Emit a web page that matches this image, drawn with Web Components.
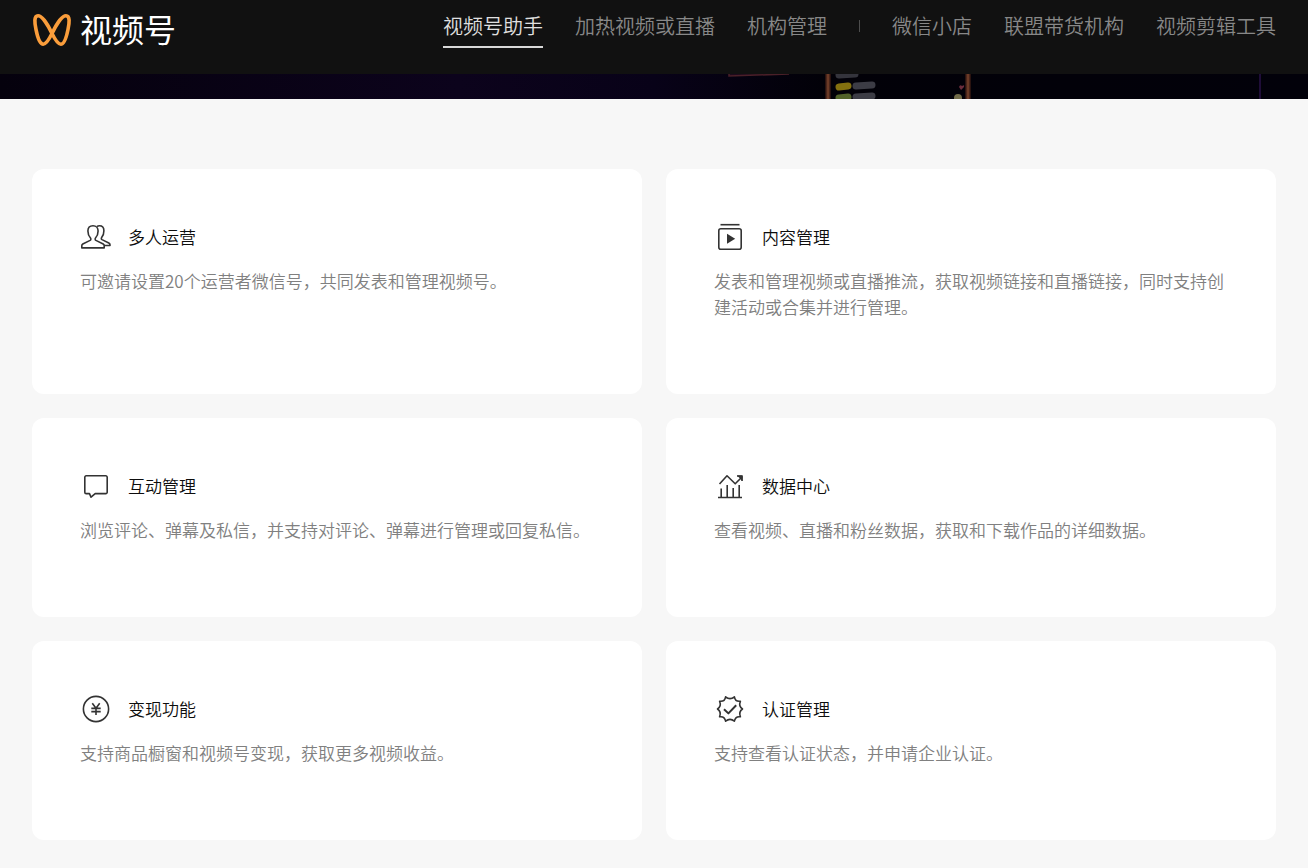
<!DOCTYPE html>
<html lang="zh-CN">
<head>
<meta charset="utf-8">
<meta name="viewport" content="width=device-width, initial-scale=1">
<title>视频号助手</title>
<style>
    body {
        --color-bar: #111111;
        --color-page: #f7f7f7;
        --color-title: #0d0d0d;
        --color-text: #808080;
        --gutter: 32px;

        margin: 0;
        background: var(--color-page);
        font-family: "Noto Sans CJK SC", sans-serif;
        font-weight: 350;
    }
</style>
</head>
<body>

<site-header>
    <nav-link href="#assistant" active>视频号助手</nav-link>
    <nav-link href="#promote">加热视频或直播</nav-link>
    <nav-link href="#agency">机构管理</nav-link>
    <nav-divider></nav-divider>
    <nav-link href="#shop">微信小店</nav-link>
    <nav-link href="#alliance">联盟带货机构</nav-link>
    <nav-link href="#editor">视频剪辑工具</nav-link>
</site-header>

<hero-banner></hero-banner>

<feature-grid>
    <feature-card icon="people" heading="多人运营">可邀请设置20个运营者微信号，共同发表和管理视频号。</feature-card>
    <feature-card icon="content" heading="内容管理">发表和管理视频或直播推流，获取视频链接和直播链接，同时支持创建活动或合集并进行管理。</feature-card>
    <feature-card icon="comment" heading="互动管理">浏览评论、弹幕及私信，并支持对评论、弹幕进行管理或回复私信。</feature-card>
    <feature-card icon="data" heading="数据中心">查看视频、直播和粉丝数据，获取和下载作品的详细数据。</feature-card>
    <feature-card icon="money" heading="变现功能">支持商品橱窗和视频号变现，获取更多视频收益。</feature-card>
    <feature-card icon="verify" heading="认证管理">支持查看认证状态，并申请企业认证。</feature-card>
</feature-grid>

<script>
const ICONS = {
    people: `
        <path d="M13 4.700c-3.200 0-5.100 2.200-5.100 5.200 0 3 .9 5.300 2.600 7.100.6.7.4 1.900-.4 2.400l-7.300 3.600c-.7.4-1 .9-1 1.700v2.200h22.400v-2.200c0-.8-.3-1.300-1-1.700l-7.300-3.600c-.8-.5-1-1.700-.4-2.400 1.700-1.800 2.600-4.100 2.600-7.100 0-3-1.900-5.200-5.100-5.200z"/>
        <path d="M17 5.500c.8-.5 1.500-.7 2.400-.7 2.900 0 4.500 2 4.500 5 0 2.800-.7 5-2.200 6.600-.6.7-.5 1.700.3 2.200l6.800 3.400c.8.4 1.200.9 1.200 1.700v.8h-6"/>`,
    content: `
        <path d="M6.500 3.700h19"/>
        <rect x="4.800" y="7.700" width="22.400" height="20.600" rx="2"/>
        <path class="solid" d="M13 12.800v10l8.200-5z"/>`,
    comment: `
        <path d="M6.200 5.800h19.600a1.400 1.400 0 0 1 1.400 1.400v15a1.400 1.400 0 0 1-1.400 1.400H15.200L11 27.200l-1.500-3.600H6.200a1.400 1.400 0 0 1-1.400-1.400v-15a1.400 1.400 0 0 1 1.400-1.400z"/>`,
    data: `
        <path d="M4 27.500h24M7.200 27V18.500M13.200 27V15M19.200 27V18M25.200 27V15"/>
        <path d="M5.500 14L13 5.800l8.200 8L28 7"/>
        <path d="M23 6H28v5"/>
        <path class="solid" d="M28.500 5.500v5.500l-5.500-5.500z"/>`,
    money: `
        <circle cx="16" cy="16" r="12.600"/>
        <path d="M12.300 10.200l3.700 5 3.700-5M16 15.200V22M11.300 15.400h9.400M11.300 18.600h9.400"/>`,
    verify: `
        <path d="M11.600 3.800Q16 7.600 20.400 3.800Q21.300 9 26.400 8.200Q24.400 13.200 28.500 16Q24.400 18.800 26.400 23.800Q21.300 23 20.400 28.200Q16 24.600 11.600 28.200Q10.700 23 5.600 23.800Q7.600 18.800 3.500 16Q7.600 13.200 5.600 8.200Q10.700 9 11.600 3.800z"/>
        <path class="bold" d="M10 16.200l4.400 4.200 7.800-8.200"/>`
};

class SiteHeader extends HTMLElement {
    constructor() {
        super();
        this.attachShadow({ mode: "open" });

        this.shadowRoot.innerHTML = `
            <style>
                :host {
                    display: block;
                    background: var(--color-bar);
                }

                header {
                    display: flex;
                    align-items: flex-start;
                    justify-content: space-between;
                    box-sizing: border-box;
                    min-height: 74px;
                    padding: 12px var(--gutter) 0;
                }

                .brand {
                    display: flex;
                    align-items: flex-start;
                    gap: 8px;
                    color: #ffffff;
                    font-size: 32px;
                    font-weight: 400;
                    line-height: 32px;
                    text-decoration: none;
                    white-space: nowrap;
                }

                nav {
                    display: flex;
                    gap: 32px;
                }
            </style>

            <header>
                <a class="brand" href="#home">
                    <svg width="40" height="36" viewBox="0 0 40 36" fill="none" stroke="#fa9d3b" stroke-width="3.600" stroke-linejoin="round" aria-hidden="true">
                        <path d="M20 21.500C16.500 14 10.500 3.800 6 3.800C1.800 3.800 2.600 11 4 17.500C5.500 25 8 32.200 11.200 32.200C14.500 32.200 17.500 26.500 20 21.500C22.500 26.500 25.500 32.200 28.800 32.200C32 32.200 34.500 25 36 17.500C37.400 11 38.200 3.800 34 3.800C29.500 3.800 23.500 14 20 21.500z"/>
                    </svg>
                    <span>视频号</span>
                </a>
                <nav><slot></slot></nav>
            </header>
        `;
    }
}

class NavLink extends HTMLElement {
    constructor() {
        super();
        this.attachShadow({ mode: "open" });

        this.shadowRoot.innerHTML = `
            <style>
                :host {
                    display: block;
                }

                a {
                    display: block;
                    padding-bottom: 6px;
                    border-bottom: 2px solid transparent;
                    color: #888888;
                    font-size: 20px;
                    line-height: 28px;
                    text-decoration: none;
                    white-space: nowrap;
                }

                :host([active]) a {
                    border-color: #d8d8d8;
                    color: #e0e0e0;
                }
            </style>

            <a><slot></slot></a>
        `;
    }

    connectedCallback() {
        this.shadowRoot.querySelector("a").href = this.getAttribute("href");
    }
}

class NavDivider extends HTMLElement {
    constructor() {
        super();
        this.attachShadow({ mode: "open" });

        this.shadowRoot.innerHTML = `
            <style>
                :host {
                    display: block;
                    width: 1px;
                    height: 12px;
                    margin-top: 8px;
                    background: #4d4d4d;
                }
            </style>
        `;
    }
}

class HeroBanner extends HTMLElement {
    constructor() {
        super();
        this.attachShadow({ mode: "open" });

        this.shadowRoot.innerHTML = `
            <style>
                :host {
                    display: block;
                    background: #020108;
                }

                svg {
                    display: block;
                    width: 100%;
                    height: 25px;
                }
            </style>

            <svg viewBox="0 0 1308 25" preserveAspectRatio="xMidYMin slice" aria-hidden="true">
                <defs>
                    <linearGradient id="glow">
                        <stop offset="0" stop-color="#05010d"/>
                        <stop offset=".35" stop-color="#0c031c"/>
                        <stop offset=".5" stop-color="#080218"/>
                        <stop offset=".63" stop-color="#020108"/>
                        <stop offset="1" stop-color="#02010a"/>
                    </linearGradient>
                </defs>
                <rect width="1308" height="25" fill="url(#glow)"/>
                <path d="M729 0v2l60-2" fill="#1d0a1c" stroke="#4a2028" stroke-width="1.500"/>
                <path d="M828 0v25M968 0v25" stroke="#2a1310" stroke-width="6"/>
                <path d="M828 0v25M968 0v25" stroke="#6b3a26" stroke-width="3"/>
                <g stroke-width="7" stroke-linecap="round">
                    <path d="M839 1l16-1" stroke="#34343c"/>
                    <path d="M839 13l9-1" stroke="#83700f"/>
                    <path d="M856 12l16-1" stroke="#3c3c45"/>
                    <path d="M839 24l9-1" stroke="#526329"/>
                    <path d="M856 23l16-1" stroke="#3c3c45"/>
                </g>
                <path d="M959 13q1-3 3-1q3-2 2 1l-3 3z" fill="#6b2d3c"/>
                <circle cx="958" cy="24" r="4" fill="#716b48"/>
                <path d="M1260 0v25" stroke="#1f0d38" stroke-width="2"/>
            </svg>
        `;
    }
}

class FeatureGrid extends HTMLElement {
    constructor() {
        super();
        this.attachShadow({ mode: "open" });

        this.shadowRoot.innerHTML = `
            <style>
                :host {
                    display: grid;
                    grid-template-columns: repeat(2, minmax(0, 1fr));
                    gap: 24px;
                    padding: 70px var(--gutter);
                }
            </style>

            <slot></slot>
        `;
    }
}

class FeatureCard extends HTMLElement {
    constructor() {
        super();
        this.attachShadow({ mode: "open" });

        this.shadowRoot.innerHTML = `
            <style>
                :host {
                    display: block;
                    padding: 48px 48px 74px;
                    border-radius: 12px;
                    background: #ffffff;
                }

                .head {
                    display: flex;
                    align-items: center;
                    gap: 16px;
                    height: 40px;
                    margin-bottom: 11px;
                }

                svg {
                    width: 32px;
                    height: 32px;
                    fill: none;
                    stroke: #333333;
                    stroke-width: 1.6;
                    stroke-linejoin: round;
                }

                .solid {
                    fill: #333333;
                    stroke: none;
                }

                .bold {
                    stroke-width: 2;
                }

                h3 {
                    margin: 0;
                    color: var(--color-title);
                    font-size: 17px;
                    font-weight: inherit;
                    line-height: 26px;
                }

                p {
                    margin: 0;
                    color: var(--color-text);
                    font-size: 17px;
                    line-height: 26px;
                }
            </style>

            <div class="head">
                <svg viewBox="0 0 32 32" aria-hidden="true"></svg>
                <h3></h3>
            </div>
            <p><slot></slot></p>
        `;
    }

    connectedCallback() {
        this.shadowRoot.querySelector("svg").innerHTML = ICONS[this.getAttribute("icon")];
        this.shadowRoot.querySelector("h3").textContent = this.getAttribute("heading");
    }
}

customElements.define("site-header", SiteHeader);
customElements.define("nav-link", NavLink);
customElements.define("nav-divider", NavDivider);
customElements.define("hero-banner", HeroBanner);
customElements.define("feature-grid", FeatureGrid);
customElements.define("feature-card", FeatureCard);
</script>
</body>
</html>
